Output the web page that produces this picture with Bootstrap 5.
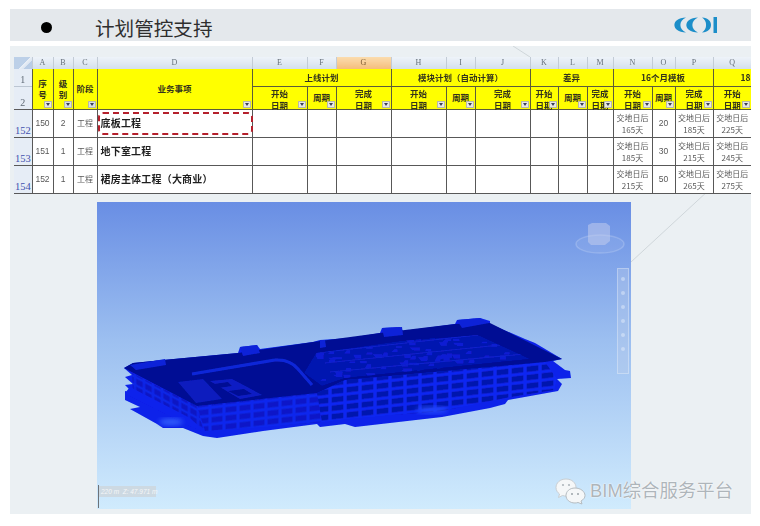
<!DOCTYPE html>
<html lang="zh-CN">
<head>
  <meta charset="UTF-8" />
  <meta name="viewport" content="width=device-width, initial-scale=1" />
  <title>计划管控支持</title>
  <link href="https://cdn.jsdelivr.net/npm/bootstrap@5.3.0/dist/css/bootstrap.min.css" rel="stylesheet" />
  <style>
    body { background: #fff; font-family: "Liberation Sans", "Noto Sans CJK SC", sans-serif; overflow: hidden; }
    .slide { width: 760px; height: 526px; padding: 9px 9px 12px 10px; }
    .title-band { height: 32px; background: #e4e8ec; padding: 5px 34px 0 31px; }
    .title-dot { width: 11px; height: 11px; border-radius: 50%; background: #000; margin-right: 43px; }
    .title-text { font-size: 19.6px; line-height: 27px; color: #2e2e2e; font-family: "Noto Sans CJK SC", sans-serif; font-weight: 400; margin: 0; }
    .title-logo { margin-top: 1px; }
    .panel { height: 468px; margin-top: 5px; padding-top: 11px; padding-left: 4px; background: #ebf0f3; overflow: hidden; }
    .panel-lines { position: absolute; left: 0; top: 0; width: 741px; height: 468px; }

    .sheet { width: 737px; table-layout: fixed; border-collapse: collapse; margin: 0; position: relative; filter: blur(.3px); font-family: "Noto Sans CJK SC", sans-serif; }
    .sheet > :not(caption) > * > * { padding: 0; border: 0; box-shadow: none; background: transparent; color: inherit; }
    .sheet tr.letters { height: 12px; }
    .sheet tr.head-a { height: 17px; }
    .sheet tr.head-b { height: 23px; }
    .sheet tr.data { height: 28px; }
    .sheet tr.letters th { background: linear-gradient(#eef3f9, #d3dfec); border-left: 1px solid #c3ccd6; color: #66707a; font: 400 8px/12px "Liberation Serif", serif; text-align: center; }
    .sheet tr.letters th.picked { background: linear-gradient(#fbdcae, #f4bd7c); color: #7b5a33; }
    .sheet tr.letters th.corner { background: linear-gradient(135deg, #bcd0e8 55%, #eaf0f7 56%, #dbe5f1 70%, #b9cde6 71%); border-left: 0; }
    .sheet .head-a th, .sheet .head-b th { background: #ffff00; color: #33331c; font-weight: 700; font-size: 8.5px; line-height: 11px; text-align: center; vertical-align: middle; position: relative; }
    .sheet .yel { border-left: 1px solid #5c5c3a; border-bottom: 1px solid #5c5c3a; }
    .sheet .head-a th.gutter, .sheet .head-b th.gutter { background: #e6edf6; color: #606a76; font: 400 10px/12px "Liberation Serif", serif; vertical-align: bottom; }
    .sheet .head-b th.gutter { border-bottom: 1px solid #5a5a5a; border-top: 1px solid #bcc6d2; }
    .sheet .head-a th.edge-text { text-align: left; padding-left: 27px; }
    .two-line { display: block; height: 21px; line-height: 12px; }
    .filter-btn { position: absolute; right: 1px; bottom: 1px; width: 8px; height: 7px; background: #e8e8e4; border: 1px solid #b9b9a8; }
    .filter-btn::after { content: ""; position: absolute; left: 1px; top: 1px; border: 2px solid transparent; border-top: 3px solid #3a3f55; border-bottom: 0; }
    .filter-btn.sorted { background: #d7e0e4; }
    .sheet tr.data td { background: #fff; color: #585858; border-left: 1px solid #585858; border-bottom: 1px solid #585858; font-size: 8px; line-height: 12px; text-align: center; vertical-align: middle; position: relative; }
    .sheet tr.data td.row-no { background: #e6edf6; color: #4350ad; border-left: 0; text-align: left; vertical-align: bottom; padding-left: 1px; font: 400 10.5px/12px "Liberation Serif", serif; }
    .sheet tr.data td.num { font-family: "Liberation Sans", sans-serif; font-size: 8.5px; }
    .sheet tr.data td.task { text-align: left; padding-left: 3px; color: #1f1f1f; font-weight: 700; font-size: 10px; letter-spacing: .2px; white-space: nowrap; }
    .sheet tr.data td.timing { padding-top: 2px; }
    .dash-box { position: absolute; left: 0; right: -1px; top: 2px; bottom: 2px; border: 2px dashed #b5202c; border-radius: 5px; }

    .viewer { width: 534px; height: 307px; margin: 8px 0 0 83px; background: linear-gradient(#698ee4, #9cbff0 45%, #d0ebfd); overflow: hidden; }
    .viewer svg { display: block; }
    .nav-strip { position: absolute; right: 2px; top: 66px; width: 12px; height: 106px; border: 1px solid rgba(255,255,255,.3); background: rgba(190,205,235,.35); padding-top: 8px; gap: 10px; }
    .nav-tick { width: 4px; height: 4px; border-radius: 50%; background: rgba(235,242,252,.45); }
    .scale-tag { position: absolute; left: 2px; top: 284px; width: 57px; height: 11px; background: rgba(205,212,218,.75); color: #f4f6f8; font: italic 6.5px/11px "Liberation Sans", sans-serif; padding-left: 2px; white-space: nowrap; }
    .scale-bar { position: absolute; left: 1px; top: 283px; width: 1px; height: 23px; background: #6d7278; }
    .watermark { position: absolute; left: 545px; top: 431px; gap: 4px; }
    .watermark-text { font-family: "Liberation Sans", "Noto Sans CJK SC", sans-serif; font-size: 18.4px; line-height: 28px; color: #aeb5ba; text-shadow: 0 0 2px #fff, 0 0 1px #fff; white-space: nowrap; }
  </style>
</head>
<body>
  <div class="slide">
    <header class="title-band d-flex align-items-center">
      <span class="title-dot"></span>
      <h1 class="title-text flex-grow-1">计划管控支持</h1>
      <svg class="title-logo align-self-start" width="44" height="20" viewBox="0 0 44 20" fill="#1c8ec9">
        <path d="M13 2.5 C-2.5 3 -2.5 17 13 17.5 C5.5 14.5 5.5 5.5 13 2.5 Z" />
        <path d="M25 2.5 C9.5 3 9.5 17 25 17.5 C17.5 14.5 17.5 5.5 25 2.5 Z" />
        <path d="M29 2.5 C41 3 41 17 29 17.5 C34.5 14.5 34.5 5.5 29 2.5 Z" />
        <rect x="40.5" y="2" width="3.5" height="16" />
      </svg>
    </header>

    <main class="panel position-relative">
      <svg class="panel-lines" viewBox="10 46 741 468" fill="none" stroke="#cfd6da" stroke-width="1">
        <path d="M513 46 L530 57" />
        <path d="M631 262 L722 178" />
        <path d="M355 508 L364 499" />
      </svg>

      <table class="table sheet">
        <colgroup id="sheetCols"></colgroup>
        <thead>
          <tr class="letters" id="letterRow"></tr>
          <tr class="head-a">
            <th class="gutter">1</th>
            <th rowspan="2" class="yel">序<br />号<span class="filter-btn"></span></th>
            <th rowspan="2" class="yel">级<br />别<span class="filter-btn sorted"></span></th>
            <th rowspan="2" class="yel">阶段<span class="filter-btn sorted"></span></th>
            <th rowspan="2" class="yel">业务事项<span class="filter-btn"></span></th>
            <th colspan="3" class="yel">上线计划</th>
            <th colspan="3" class="yel">模块计划（自动计算）</th>
            <th colspan="3" class="yel">差异</th>
            <th colspan="3" class="yel">16个月模板</th>
            <th class="yel edge-text">18</th>
          </tr>
          <tr class="head-b" id="subHead"><th class="gutter">2</th></tr>
        </thead>
        <tbody id="sheetBody"></tbody>
      </table>

      <section class="viewer position-relative">
        <svg width="534" height="307" viewBox="97 201 534 307">
          <defs>
            <pattern id="frontGrid" width="15" height="8.4" patternUnits="userSpaceOnUse" patternTransform="skewY(-6.5) translate(0 4)">
              <rect width="15" height="8.4" fill="#0b28f2" />
              <rect x="1.6" y="1.6" width="11.8" height="5.4" fill="#0513ae" />
            </pattern>
            <pattern id="frontSoft" width="14" height="8.4" patternUnits="userSpaceOnUse" patternTransform="skewY(-6.5) translate(0 2)">
              <rect width="14" height="8.4" fill="#0c28ee" />
              <rect x="1.4" y="1.4" width="11.2" height="5.6" fill="#0819c8" />
            </pattern>
            <pattern id="sideGrid" width="9" height="8" patternUnits="userSpaceOnUse" patternTransform="skewY(28)">
              <rect width="9" height="8" fill="#0c25e6" />
              <rect x="1.3" y="1.3" width="6.4" height="5.4" fill="#0817c4" />
            </pattern>
            <clipPath id="yardClip"><path d="M316 352 L400 340 L478 334 L502 345 L530 358 L345 377 L322 385 L304 372 Z" /></clipPath>
            <filter id="soft"><feGaussianBlur stdDeviation=".6" /></filter>
            <filter id="glow"><feGaussianBlur stdDeviation="2.5" /></filter>
          </defs>

          <!-- view cube -->
          <ellipse cx="600" cy="243" rx="24" ry="9" fill="rgba(255,255,255,.07)" stroke="rgba(255,255,255,.18)" stroke-width="1.5" />
          <path d="M588 224 L592 222 L606 222 L610 225 V240 L605 244 H591 L588 241 Z" fill="rgba(200,208,238,.5)" />

          <g filter="url(#soft)">
            <!-- whole outline, the notches on the left are the floor slabs -->
            <path fill="#0a20ea" d="M124 367 L133 362 L163 359 L238 352 L240 346 L257 344 L260 348 L313 341 L320 339 L350 337 L380 332 L382 327 L400 326 L403 330 L455 323 L457 319 L480 317 L490 320 L490 323 L525 338 L535 342 L562 358 L553 360 L565 369 L570 370 L571 377 L557 378 L562 383 L558 390 L508 399 L505 403 L490 407 L442 416 L355 426 L345 423 L320 426 L317 423 L263 430 L217 437 L203 435 L183 427 L163 427 L157 423 L130 408 L140 406 L125 399 L125 390 L133 392 L125 384 L133 383 L125 376 L132 374 Z" />
            <!-- side and front walls -->
            <path fill="url(#sideGrid)" d="M132 372 L197 405 L203 428 L186 418 L133 390 Z" />
            <path fill="url(#frontSoft)" d="M197 405 L317 392 L322 421 L263 426 L205 430 Z" />
            <path fill="url(#frontGrid)" d="M317 392 L345 379 L545 361 L557 378 L554 389 L505 397 L442 410 L345 418 L322 421 Z" />
            <!-- roof -->
            <path fill="#050f94" d="M124 367 L133 362 L163 359 L238 352 L313 341 L380 332 L455 323 L490 322 L562 358 L545 361 L345 379 L317 392 L197 405 Z" />
            <g clip-path="url(#yardClip)">
              <path fill="#0614b0" d="M316 352 L400 340 L478 334 L502 345 L530 358 L345 377 L322 385 L304 372 Z" />
              <path id="yardSpecks" fill="#0a1fd4" d="" />
              <path fill="none" stroke="#0a22cc" stroke-width="1.2" d="M316 352 L478 334 M325 362 L500 344 M330 371 L525 353" />
            </g>
            <!-- courtyard ring and inner blocks -->
            <path fill="none" stroke="#0a28d8" stroke-width="3" d="M192 373 L275 359 Q290 358 298 368 L312 384" />
            <path fill="#0a1fc8" d="M178 381 L203 378 L222 398 L196 402 Z" opacity=".8" />
            <path fill="#0a1ec4" d="M210 380 L232 378 L262 394 L240 398 Z" />
            <path fill="#050f94" d="M214 383 L228 381 L232 385 L218 387 Z M228 390 L244 388 L252 393 L238 395 Z" />
            <!-- roof plant boxes -->
            <path fill="#0a22d8" d="M240 346 L257 344 L260 352 L243 355 Z M320 339 L325 339 L326 346 L320 347 Z M382 327 L402 326 L403 334 L384 336 Z M457 319 L480 317 L489 322 L462 327 Z M130 364 L165 358 L166 364 L136 369 Z" />
            <path fill="#0b22ec" d="M125 392 L186 423 L205 431 L190 417 L130 386 Z" />
          </g>
          <!-- lit corners -->
          <ellipse cx="171" cy="421" rx="12" ry="3.5" fill="#3b6cff" opacity=".8" filter="url(#glow)" />
          <ellipse cx="432" cy="409" rx="16" ry="4" fill="#2a52ff" opacity=".7" filter="url(#glow)" />
        </svg>

        <div class="nav-strip d-flex flex-column align-items-center">
          <span class="nav-tick"></span><span class="nav-tick"></span><span class="nav-tick"></span>
          <span class="nav-tick"></span><span class="nav-tick"></span><span class="nav-tick"></span>
        </div>
        <div class="scale-bar"></div>
        <div class="scale-tag">220 m&nbsp; Z: 47.971 m</div>
      </section>

      <div class="watermark d-flex align-items-center">
        <svg width="31" height="27" viewBox="0 0 31 27">
          <path d="M11 1 C5 1 1 5 1 9.5 C1 12.5 2.6 14.5 4.5 16 L3.5 19.5 L7.5 17.5 C9 18 10 18 11 18 C17 18 21 14 21 9.5 C21 5 17 1 11 1 Z" fill="#f5f7f8" stroke="#c9ced2" />
          <path d="M20 10 C14.5 10 11 13.5 11 17.5 C11 21.5 14.5 25 20 25 C21 25 22 24.8 23 24.5 L27 26 L26 23 C28.5 21.5 30 19.8 30 17.5 C30 13.5 25.5 10 20 10 Z" fill="#f5f7f8" stroke="#b5bcc1" />
          <circle cx="8" cy="7" r="1.1" fill="#b0b7bc" />
          <circle cx="14" cy="7" r="1.1" fill="#b0b7bc" />
          <circle cx="17" cy="16" r="1" fill="#9aa3a9" />
          <circle cx="23" cy="16" r="1" fill="#9aa3a9" />
        </svg>
        <span class="watermark-text">BIM综合服务平台</span>
      </div>
    </main>
  </div>

<script>
  // Column widths and letters of the sheet
  const cols = [['', 18], ['A', 21], ['B', 20], ['C', 24], ['D', 155], ['E', 55], ['F', 29], ['G', 55], ['H', 55], ['I', 29], ['J', 55], ['K', 28], ['L', 29], ['M', 26], ['N', 39], ['O', 23], ['P', 38], ['Q', 38]];

  document.getElementById('sheetCols').innerHTML = cols.map(c => `<col style="width:${c[1]}px" />`).join('');
  document.getElementById('letterRow').innerHTML = cols.map((c, i) =>
    `<th class="${i === 0 ? 'corner' : c[0] === 'G' ? 'picked' : ''}">${c[0]}</th>`).join('');

  const subTitles = ['<span class="two-line">开始<br />日期</span>', '周期', '<span class="two-line">完成<br />日期</span>'];
  let sub = '';
  for (let i = 0; i < 13; i++) {
    sub += `<th class="yel">${subTitles[i % 3]}<span class="filter-btn"></span></th>`;
  }
  document.getElementById('subHead').insertAdjacentHTML('beforeend', sub);

  const rows = [
    { no: 152, id: 150, level: 2, name: '底板工程', boxed: true, n: 165, o: 20, p: 185, q: 225 },
    { no: 153, id: 151, level: 1, name: '地下室工程', n: 185, o: 30, p: 215, q: 245 },
    { no: 154, id: 152, level: 1, name: '裙房主体工程（大商业）', n: 215, o: 50, p: 265, q: 275 }
  ];

  document.getElementById('sheetBody').innerHTML = rows.map(r => `<tr class="data">
      <td class="row-no">${r.no}</td>
      <td class="num">${r.id}</td>
      <td class="num">${r.level}</td>
      <td>工程</td>
      <td class="task">${r.name}${r.boxed ? '<span class="dash-box"></span>' : ''}</td>
      ${'<td></td>'.repeat(9)}
      <td class="timing">交地日后<br />${r.n}天</td>
      <td class="num">${r.o}</td>
      <td class="timing">交地日后<br />${r.p}天</td>
      <td class="timing">交地日后<br />${r.q}天</td>
    </tr>`).join('');

  // Busy light patches of the courtyard, repeatable pseudo random
  let seed = 7;
  function next(max) {
    seed = (seed * 9301 + 49297) % 233280;
    return seed / 233280 * max;
  }
  let specks = '';
  for (let i = 0; i < 110; i++) {
    const x = 305 + next(225);
    const y = 334 + next(50);
    specks += `M${x.toFixed(1)} ${y.toFixed(1)}h${(3 + next(7)).toFixed(1)}v${(1.5 + next(3)).toFixed(1)}h-6z`;
  }
  document.getElementById('yardSpecks').setAttribute('d', specks);
</script>
<script src="https://cdn.jsdelivr.net/npm/bootstrap@5.3.0/dist/js/bootstrap.bundle.min.js"></script>
</body>
</html>
